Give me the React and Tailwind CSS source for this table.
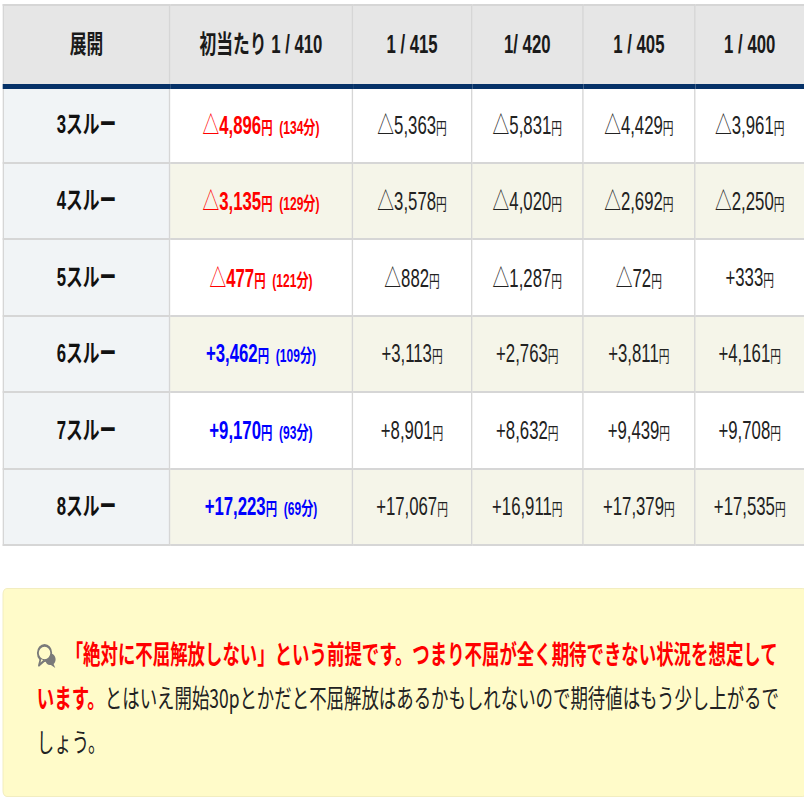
import React from "react";

const rows = [
  { label: "3スルー", first: "△4,896", mins: "134分", vals: ["△5,363", "△5,831", "△4,429", "△3,961"], color: "text-[#ff0000]" },
  { label: "4スルー", first: "△3,135", mins: "129分", vals: ["△3,578", "△4,020", "△2,692", "△2,250"], color: "text-[#ff0000]" },
  { label: "5スルー", first: "△477", mins: "121分", vals: ["△882", "△1,287", "△72", "+333"], color: "text-[#ff0000]" },
  { label: "6スルー", first: "+3,462", mins: "109分", vals: ["+3,113", "+2,763", "+3,811", "+4,161"], color: "text-[#0000ff]" },
  { label: "7スルー", first: "+9,170", mins: "93分", vals: ["+8,901", "+8,632", "+9,439", "+9,708"], color: "text-[#0000ff]" },
  { label: "8スルー", first: "+17,223", mins: "69分", vals: ["+17,067", "+16,911", "+17,379", "+17,535"], color: "text-[#0000ff]" },
];

const heads = ["展開", "初当たり 1 / 410", "1 / 415", "1/ 420", "1 / 405", "1 / 400"];

const Amount = ({ v }) => {
  const tri = v.startsWith("△");
  return (
    <span className="text-[25px]">
      {tri && <span className="font-['Noto_Sans_CJK_JP',sans-serif] font-normal">△</span>}
      {tri ? v.slice(1) : v}
    </span>
  );
};

const CommentIcon = () => (
  <svg width="29" height="24" viewBox="0 0 29 24" className="inline-block align-[-4px] mr-[14px]">
    <path d="M14 12 C16 9 23 8.5 26.5 12 C29.5 15 27.5 19 25 20 L27.5 24 L21 21 C17 21.5 14 20 13 17 Z" fill="#7a7a7a" />
    <ellipse cx="11.5" cy="9" rx="10" ry="7.6" fill="#fffbc9" stroke="#7a7a7a" strokeWidth="2.8" />
    <path d="M5.5 15 L3 21.5 L11.5 16.4" fill="#fffbc9" stroke="#7a7a7a" strokeWidth="2.4" strokeLinejoin="round" />
  </svg>
);

export default function App() {
  return (
    <div className="w-[804px] h-[804px] overflow-hidden bg-white">
      <div className="w-[1200px] origin-top-left scale-x-[0.67] pt-1 pl-[4px] font-['Liberation_Sans','Noto_Sans_CJK_JP',sans-serif]">
        <table className="table-fixed w-[1196px] border-collapse text-center">
          <colgroup>
            <col className="w-[248px]" />
            <col className="w-[273px]" />
            <col className="w-[178px]" />
            <col className="w-[166px]" />
            <col className="w-[167px]" />
            <col className="w-[164px]" />
          </colgroup>
          <thead>
            <tr className="h-[81px]">
              {heads.map((h) => (
                <th
                  key={h}
                  className="bg-[#e6e6e6] border-2 border-[#d6d6d6] border-b-[5px] border-b-[#063268] text-[25px] font-bold text-[#1a1a1a]"
                >
                  {h}
                </th>
              ))}
            </tr>
          </thead>
          <tbody>
            {rows.map((r, i) => {
              const bg = i % 2 === 1 ? "bg-[#f5f5e9]" : "bg-white";
              return (
                <tr key={r.label} className="h-[76.5px]">
                  <td className="bg-[#f1f4f6] border-2 border-[#d6d6d6] text-[25px] font-bold text-[#111]">{r.label}</td>
                  <td className={`${bg} border-2 border-[#d6d6d6] font-bold ${r.color}`}>
                    <Amount v={r.first} />
                    <span className="text-[17px]">円</span>
                    <span className="text-[18px] ml-[10px]">({r.mins})</span>
                  </td>
                  {r.vals.map((v, j) => (
                    <td key={j} className={`${bg} border-2 border-[#d6d6d6] text-[#222]`}>
                      <Amount v={v} />
                      <span className="text-[16px]">円</span>
                    </td>
                  ))}
                </tr>
              );
            })}
          </tbody>
        </table>

        <div className="mt-[42px] w-[1200px] h-[209px] bg-[#fffbc9] border border-[#efe9b8] rounded-[6px] pl-[50px] pt-[42px] font-['Noto_Sans_CJK_JP',sans-serif] text-[26px] leading-[44px] text-[#222]">
          <p>
            <CommentIcon />
            <span className="font-bold text-[#ff0000]">
              「絶対に不屈解放しない」という前提です。つまり不屈が全く期待できない状況を想定して
              <br />
              います。
            </span>
            とはいえ開始30pとかだと不屈解放はあるかもしれないので期待値はもう少し上がるで
            <br />
            しょう。
          </p>
        </div>
      </div>
    </div>
  );
}
